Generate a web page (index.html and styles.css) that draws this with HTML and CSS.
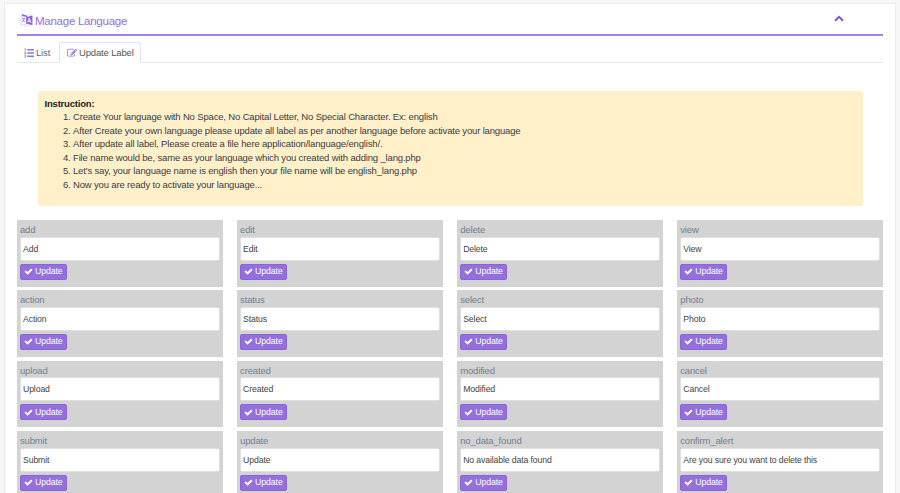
FILE: index.html
```
<!DOCTYPE html>
<html lang="en">
<head>
<meta charset="utf-8">
<title>Manage Language</title>
<link rel="stylesheet" href="styles.css">
</head>
<body>
<svg class="defs" width="0" height="0"><symbol id="check" viewBox="0 0 1792 1792"><path d="M1671 566q0 40-28 68l-724 724-136 136q-28 28-68 28t-68-28l-136-136-362-362q-28-28-28-68t28-68l136-136q28-28 68-28t68 28l294 295 656-657q28-28 68-28t68 28l136 136q28 28 28 68z"/></symbol></svg>
<main class="panel">
<header class="title">
<h1><svg class="lang" viewBox="0 0 14 14"><path class="sheet" d="M1 2.6 7 4.3V11L1 12.8Z"/><path class="mark" d="M2.3 5.7 5.3 5.2M3.7 4.7v1M4.8 5.5Q4 8 2.2 9M2.8 7Q4 8.5 5.6 8.8"/><path class="arc" d="M4 12.6Q7 14.2 10 12.7M8 1.2Q10.5 .5 12 2.5"/><path class="solid" d="M2 .5 7.8 2.4V4L2.2 2.3ZM6.6 4 13.4 2.2V12.6L6.6 10.8Z"/><path class="cut" d="M8.4 9.6 10 5l1.7 5.1M9 8.3l2 .3"/></svg><span>Manage Language</span></h1>
<svg class="chevron" viewBox="0 0 10 7"><path d="M1 5.7 5 1.8 9 5.7"/></svg>
</header>
<nav class="tabs">
<a class="tab"><svg class="list" viewBox="0 0 10 10"><path d="M3.2 1.7H10M3.2 5H10M3.2 8.3H10"/><path class="nums" d="M.5 1 1.3.6V2.8M.5 4 1.8 4 .6 5.8H2M.5 7.3H1.8L1.2 8.2Q2.2 9.5.4 9.5"/></svg><span>List</span></a>
<a class="tab active"><svg class="edit" viewBox="0 0 1792 1792"><path d="M888 1184l116-116-152-152-116 116v56h96v96h56zm440-720q-16-16-33 1l-350 350q-17 17-1 33t33-1l350-350q17-17 1-33zm80 594v190q0 119-84.500 203.500t-203.500 84.500h-832q-119 0-203.500-84.500t-84.500-203.500v-832q0-119 84.500-203.500t203.500-84.500h832q63 0 117 25 15 7 18 23 3 17-9 29l-49 49q-14 14-32 8-23-6-45-6h-832q-66 0-113 47t-47 113v832q0 66 47 113t113 47h832q66 0 113-47t47-113v-126q0-13 9-22l64-64q15-15 35-7t20 29zm-96-738l288 288-672 672h-288v-288zm444 132l-92 92-288-288 92-92q28-28 68-28t68 28l152 152q28 28 28 68t-28 68z"/></svg><span>Update Label</span></a>
</nav>
<section class="notice">
<strong>Instruction:</strong>
<ol>
<li>Create Your language with No Space, No Capital Letter, No Special Character. Ex: english</li>
<li>After Create your own language please update all label as per another language before activate your language</li>
<li>After update all label, Please create a file here application/language/english/.</li>
<li>File name would be, same as your language which you created with adding _lang.php</li>
<li>Let's say, your language name is english then your file name will be english_lang.php</li>
<li>Now you are ready to activate your language...</li>
</ol>
</section>
<section class="grid">
<div class="card"><label>add</label><div class="field">Add</div><button><svg><use href="#check"/></svg>Update</button></div>
<div class="card"><label>edit</label><div class="field">Edit</div><button><svg><use href="#check"/></svg>Update</button></div>
<div class="card"><label>delete</label><div class="field">Delete</div><button><svg><use href="#check"/></svg>Update</button></div>
<div class="card"><label>view</label><div class="field">View</div><button><svg><use href="#check"/></svg>Update</button></div>
<div class="card"><label>action</label><div class="field">Action</div><button><svg><use href="#check"/></svg>Update</button></div>
<div class="card"><label>status</label><div class="field">Status</div><button><svg><use href="#check"/></svg>Update</button></div>
<div class="card"><label>select</label><div class="field">Select</div><button><svg><use href="#check"/></svg>Update</button></div>
<div class="card"><label>photo</label><div class="field">Photo</div><button><svg><use href="#check"/></svg>Update</button></div>
<div class="card"><label>upload</label><div class="field">Upload</div><button><svg><use href="#check"/></svg>Update</button></div>
<div class="card"><label>created</label><div class="field">Created</div><button><svg><use href="#check"/></svg>Update</button></div>
<div class="card"><label>modified</label><div class="field">Modified</div><button><svg><use href="#check"/></svg>Update</button></div>
<div class="card"><label>cancel</label><div class="field">Cancel</div><button><svg><use href="#check"/></svg>Update</button></div>
<div class="card"><label>submit</label><div class="field">Submit</div><button><svg><use href="#check"/></svg>Update</button></div>
<div class="card"><label>update</label><div class="field">Update</div><button><svg><use href="#check"/></svg>Update</button></div>
<div class="card"><label>no_data_found</label><div class="field">No available data found</div><button><svg><use href="#check"/></svg>Update</button></div>
<div class="card"><label>confirm_alert</label><div class="field">Are you sure you want to delete this</div><button><svg><use href="#check"/></svg>Update</button></div>
</section>
</main>
</body>
</html>
```
FILE: styles.css
```
* { box-sizing: border-box; }
html, body { height: 493px; overflow: hidden; }
body { margin: 0; padding: 3px 4px 0; background: #f7f7f7; color: #3c3c3c; font: 9.5px/13.45px "Liberation Sans", Arial, sans-serif; letter-spacing: -.16px; }
.defs { display: block; height: 0; }
.panel { height: 510px; padding: 0 12px; background: #fff; border: 1px solid #ebebeb; }
.title { height: 32px; display: flex; justify-content: space-between; border-bottom: 2px solid #a583e6; color: #9370db; }
h1 { margin: 0; padding: 8px 0 0 3px; display: flex; gap: 2px; font-size: 11.6px; font-weight: 400; line-height: 18px; letter-spacing: -.31px; }
.lang { width: 13px; height: 14px; margin-top: 1px; fill: none; stroke: #9370db; stroke-width: .9; }
.lang .sheet, .lang .arc { stroke: #c5b2ed; stroke-dasharray: 1 .5; }
.lang .solid { fill: #8a63d7; stroke: none; }
.lang .cut { stroke: #fff; stroke-width: 1; }
.chevron { width: 10px; height: 7px; margin: 11px 39px 0 0; fill: none; stroke: #8055d2; stroke-width: 2; }
.tabs { height: 27px; display: flex; align-items: flex-end; border-bottom: 1px solid #e4e7eb; }
.tab { height: 21px; margin-bottom: -1px; padding: 0 8px 0 6px; display: flex; align-items: center; gap: 2px; border: 1px solid transparent; border-radius: 3px 3px 0 0; color: #5a6a7e; }
.tab.active { width: 82px; padding: 0 0 0 7px; background: #fff; border-color: #e0e3e7; border-bottom-color: #fff; color: #555; }
.tab:first-child { width: 42px; }
.tab svg { flex: none; width: 10px; height: 10px; }
.tab .edit { fill: #9370db; }
.tab span { white-space: nowrap; }
.list { fill: none; stroke: #9370db; stroke-width: 1.6; }
.list .nums { stroke-width: .8; }
.notice { height: 115px; margin: 28px 20.5px 14px; padding: 6px 7px; background: #fff0ca; border-radius: 3px; }
.notice strong { display: block; color: #222; letter-spacing: -.2px; }
ol { margin: 0; padding: 0 0 0 28.5px; }
.grid { display: grid; grid-template-columns: repeat(4, 1fr); gap: 3.7px 14.4px; }
.card { height: 66.7px; padding: 3px 3px; background: #d3d3d3; }
label { display: block; color: #708090; line-height: 13px; }
.field { height: 24px; margin-top: .5px; padding: 0 2px; background: #fff; border: 1px solid #dfdfdf; border-radius: 2px; color: #444; font-size: 8.7px; line-height: 23px; letter-spacing: -.12px; white-space: nowrap; }
button { width: 47px; height: 16px; margin: 3px 0 0; padding: 0 3px; display: flex; align-items: center; gap: 2px; background: #9370db; border: 1px solid #8a63d7; border-radius: 2px; color: #fff; font: 8.7px/13px "Liberation Sans", Arial, sans-serif; letter-spacing: -.08px; }
button svg { flex: none; width: 9px; height: 9px; fill: #fff; }
```
